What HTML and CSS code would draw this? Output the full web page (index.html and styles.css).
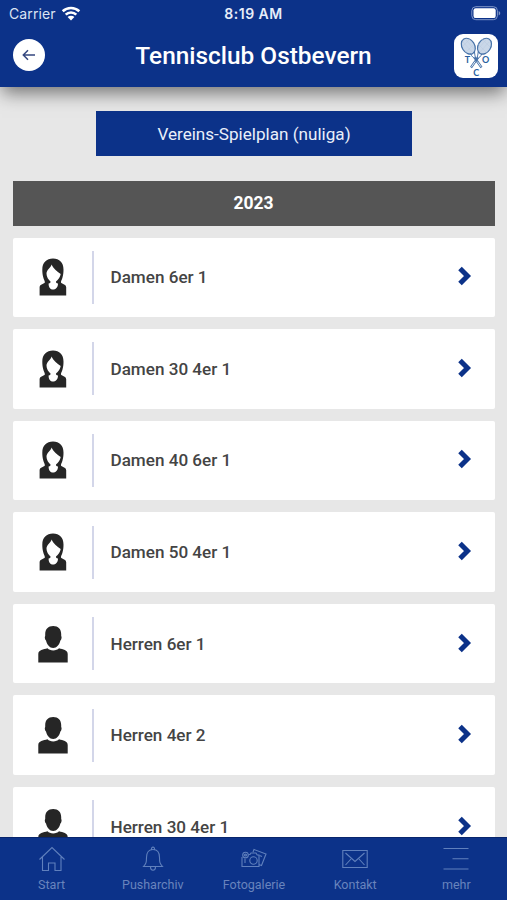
FILE: index.html
```html
<!DOCTYPE html>
<html lang="de">
<head>
<meta charset="utf-8">
<meta name="viewport" content="width=device-width, initial-scale=1">
<title>Tennisclub Ostbevern</title>
<link rel="stylesheet" href="styles.css">
</head>
<body>
<svg class="defs" aria-hidden="true">
  <symbol id="woman" viewBox="0 0 30 38">
    <path fill-rule="evenodd" d="M15 .6C8.500.6 4.300 4.800 4.300 11.500c0 3 .3 5.500 1 8 .5 2 1.700 3.500 1.500 5-.2 1.300-5.200 1.500-5.200 4.800V37.500h26.600V29.300c0-3.300-5-3.500-5.200-4.800-.2-1.500 1-3 1.500-5 .7-2.500 1-5 1-8C25.500 4.800 21.500.6 15 .6zM13.500 6.500c-.5 3.200-5 5-5 9.300 0 3.300 2 6 4 7.700.2 1-.3 1.600-1.900 2 0 4 1.900 6 4.400 6s5-2 5-6c-1.700-.4-2.200-1-2-2 2.200-1.700 4.200-4.400 4.700-7.500-3.800-2.500-7.500-5.700-9.200-9.500z"/>
  </symbol>
  <symbol id="man" viewBox="0 0 30 38">
    <path d="M15.200.9c-5 0-8 3-8 8.300v1.900c-.9.800-.2 3.900.8 4.500 1 4.300 3.700 7.500 7.200 7.500s6.200-3.200 7.200-7.500c1-.6 1.700-3.700.8-4.500V9.200C23.200 3.900 20.200.9 15.200.9z"/>
    <path d="M9.500 23.200c-4 1.300-9.200 1.500-9.200 5.800v8.500h29.400V29c0-4.300-4.700-4.500-8.700-5.800-1.300 1.300-3.300 2.200-5.800 2.200s-4.400-.9-5.700-2.200z"/>
  </symbol>
  <symbol id="chevron" viewBox="0 0 14 20">
    <path d="M2 2.500 9.500 10 2 17.500" fill="none" stroke="#0c3289" stroke-width="5"/>
  </symbol>
</svg>
<div class="app">
  <header class="header">
    <div class="status">
      <div class="carrier">Carrier
        <svg width="20" height="15" viewBox="0 0 20 15" fill="none" stroke="#fff" stroke-width="2.600">
          <path d="M1.700 5.300a12 12 0 0 1 16.600 0M4.700 8.600a7.600 7.600 0 0 1 10.600 0"/>
          <path fill="#fff" stroke="none" d="M6.600 11.100a4.800 4.800 0 0 1 6.800 0L10 14.500z"/>
        </svg>
      </div>
      <div class="clock">8:19 AM</div>
      <div class="battery">
        <svg width="30" height="15" viewBox="0 0 30 15">
          <rect x=".8" y=".7" width="25.600" height="13" rx="4" fill="none" stroke="#8097c8"/>
          <rect x="2.500" y="2.300" width="22.200" height="9.800" rx="2.200" fill="#fff"/>
          <path d="M27.700 5v4.500c2-.8 2-3.700 0-4.500z" fill="#8097c8"/>
        </svg>
      </div>
    </div>
    <div class="titlebar">
      <button class="back" aria-label="Zurück">
        <svg width="14" height="12" viewBox="0 0 14 12" fill="none" stroke="#34477f" stroke-width="1.500"><path d="M13 6H1.500M6 1.300 1.300 6 6 10.700"/></svg>
      </button>
      <h1>Tennisclub Ostbevern</h1>
      <div class="logo">
        <svg width="44" height="44" viewBox="0 0 44 44" fill="none" stroke="#4672a8">
          <g fill="#c9d7e8" stroke-width="1.200">
            <ellipse cx="14.300" cy="12.200" rx="6.300" ry="8.500" transform="rotate(-32 14.300 12.200)"/>
            <ellipse cx="30.500" cy="12.200" rx="6.300" ry="8.500" transform="rotate(32 30.500 12.200)"/>
          </g>
          <path stroke="#b5c7dd" stroke-width=".4" d="m9 8 9 10M12 6l8 9M8 13l8-8M12 18l8-8M35 8l-9 10M32 6l-8 9M28 5l8 8M24 10l8 8"/>
          <path stroke-width="1" d="M16.500 19.500c1.200 3 2.700 4.300 5.300 5.500M20.500 18c.3 3 .7 5 1.300 7M28 19.500c-1.200 3-2.700 4.300-5.300 5.500M24.200 18c-.3 3-.9 5-1.500 7"/>
          <path stroke-width="2.300" d="m20.500 23.500 7 10M24 23.500l-7 10"/>
          <path stroke="#e6edf6" stroke-width="1" d="m23.300 27.500 3.700 5.300M21.200 27.500l-3.700 5.300"/>
          <g class="logo-text"><text x="13.500" y="29.300">T</text><text x="31.700" y="29.300">O</text><text x="22.300" y="41.500">C</text></g>
        </svg>
      </div>
    </div>
  </header>
  <main class="content">
    <button class="plan">Vereins-Spielplan (nuliga)</button>
    <h2 class="year">2023</h2>
    <div class="teams">
      <div class="team"><svg class="person"><use href="#woman"/></svg><span class="name">Damen 6er 1</span><svg class="chevron"><use href="#chevron"/></svg></div>
      <div class="team"><svg class="person"><use href="#woman"/></svg><span class="name">Damen 30 4er 1</span><svg class="chevron"><use href="#chevron"/></svg></div>
      <div class="team"><svg class="person"><use href="#woman"/></svg><span class="name">Damen 40 6er 1</span><svg class="chevron"><use href="#chevron"/></svg></div>
      <div class="team"><svg class="person"><use href="#woman"/></svg><span class="name">Damen 50 4er 1</span><svg class="chevron"><use href="#chevron"/></svg></div>
      <div class="team"><svg class="person"><use href="#man"/></svg><span class="name">Herren 6er 1</span><svg class="chevron"><use href="#chevron"/></svg></div>
      <div class="team"><svg class="person"><use href="#man"/></svg><span class="name">Herren 4er 2</span><svg class="chevron"><use href="#chevron"/></svg></div>
      <div class="team"><svg class="person"><use href="#man"/></svg><span class="name">Herren 30 4er 1</span><svg class="chevron"><use href="#chevron"/></svg></div>
    </div>
  </main>
  <nav class="tabs">
    <a class="tab"><svg viewBox="0 0 28 26"><path d="M1.500 13.500 14 1.500l12.500 12M4.500 11v13.500h6V17h6.500v7.500h6V11"/></svg>Start</a>
    <a class="tab"><svg viewBox="0 0 28 26"><path d="M4.500 20.500c2.500-2.800 3-4 3-9C7.500 6.500 10 3.500 14 3.500s6.500 3 6.500 8c0 5 .5 6.200 3 9zM12.500 3.200c-.3-2.800 3.300-2.800 3 0M11.500 21c0 4.300 5 4.300 5 0"/></svg>Pusharchiv</a>
    <a class="tab"><svg viewBox="0 0 28 26"><path d="M8.500 8.500H10l1-1.500h5l1.200 2H19v11.500H2V11M13 6l1-2.500L26 8l-4.500 11.500-2-.7"/><circle cx="13.500" cy="14.500" r="3.700"/><circle cx="5.500" cy="9" r="2.800"/><circle cx="5.500" cy="9" r="1"/><path d="M5 12.500V17M19.500 9.500l2.500 1"/></svg>Fotogalerie</a>
    <a class="tab"><svg viewBox="0 0 28 26"><path d="M1.800 4.500h24.400v17H1.800zM4.500 7l9.500 8.500L23.500 7M4.500 19l5.500-6M23.500 19 18 13"/></svg>Kontakt</a>
    <a class="tab"><svg viewBox="0 0 28 26"><path d="M1.500 2.500h25M10.500 12.800h16M1.500 23h25"/></svg>mehr</a>
  </nav>
</div>
</body>
</html>
```

FILE: styles.css
```css
* { box-sizing: border-box; }
body { margin: 0; font-family: Roboto, sans-serif; background: #e7e7e7; }
button { border: 0; padding: 0; font: inherit; }
.defs { display: none; }
.app { display: flex; flex-direction: column; height: 900px; overflow: hidden; }

.header {
  flex: none;
  height: 86.5px;
  background: #0c3289;
  color: #fff;
  position: relative;
  z-index: 1;
  box-shadow: 0 8px 17px -2px rgba(0, 0, 0, .5);
}
.status {
  display: grid;
  grid-template-columns: 1fr auto 1fr;
  align-items: center;
  height: 27px;
  padding: 0 6px 0 9px;
  font-family: Inter, sans-serif;
  font-size: 14px;
}
.carrier { display: flex; align-items: center; gap: 5px; color: #dce4f3; letter-spacing: .1px; }
.carrier svg { margin-top: -1px; }
.clock { font-weight: 600; font-size: 14px; letter-spacing: .5px; margin-right: 3px; color: #e7edf9; }
.battery { display: flex; justify-content: flex-end; }
.titlebar { display: flex; align-items: center; justify-content: space-between; height: 58px; padding: 0 9px 0 13px; }
.back { display: flex; align-items: center; justify-content: center; width: 32px; height: 32px; margin: -3px 12px 0 0; border-radius: 50%; background: #fff; }
.titlebar h1 { margin: 0 4px 0 0; font-size: 24.400px; line-height: 32px; font-weight: 500; }
.logo { width: 44px; height: 44px; border-radius: 9px; background: #fff; }
.logo svg { display: block; }
.logo-text { font: 700 9px Lato, sans-serif; fill: #285f9f; stroke: none; text-anchor: middle; }

.content { flex: 1; min-height: 0; overflow: hidden; padding: 24.500px 12.500px 0; display: flex; flex-direction: column; }
.plan { flex: none; align-self: center; width: 316px; height: 45px; margin-left: 1px; background: #0c3289; color: #e9effa; font-size: 17.100px; }
.year { flex: none; height: 45px; margin: 24.500px 0 12px; background: #555; color: #fff; font-size: 17.500px; line-height: 45px; font-weight: 700; text-align: center; }
.teams { display: flex; flex-direction: column; gap: 12.100px; }
.team { flex: none; height: 79.500px; display: flex; align-items: center; padding: 0 23px 0 25px; background: #fff; border-radius: 2px; }
.person { width: 30px; height: 38px; fill: #262626; }
.name { display: flex; align-items: center; flex: 1; height: 53px; margin-left: 24px; padding-left: 17px; border-left: 2px solid #d3d6e9; color: #444; font-size: 17.100px; font-weight: 500; }
.chevron { width: 14px; height: 20px; margin-top: -2px; }

.tabs { flex: none; display: grid; grid-template-columns: repeat(5, 1fr); height: 63.500px; padding-left: 1px; background: #0c3289; border-top: 1px solid #08256c; }
.tab { display: flex; flex-direction: column; align-items: center; padding-top: 8px; color: #6984bd; font-size: 12.500px; line-height: 16px; }
.tab svg { width: 28px; height: 26px; margin-bottom: 5px; fill: none; stroke: #6080bd; stroke-width: 1.100; }
```
